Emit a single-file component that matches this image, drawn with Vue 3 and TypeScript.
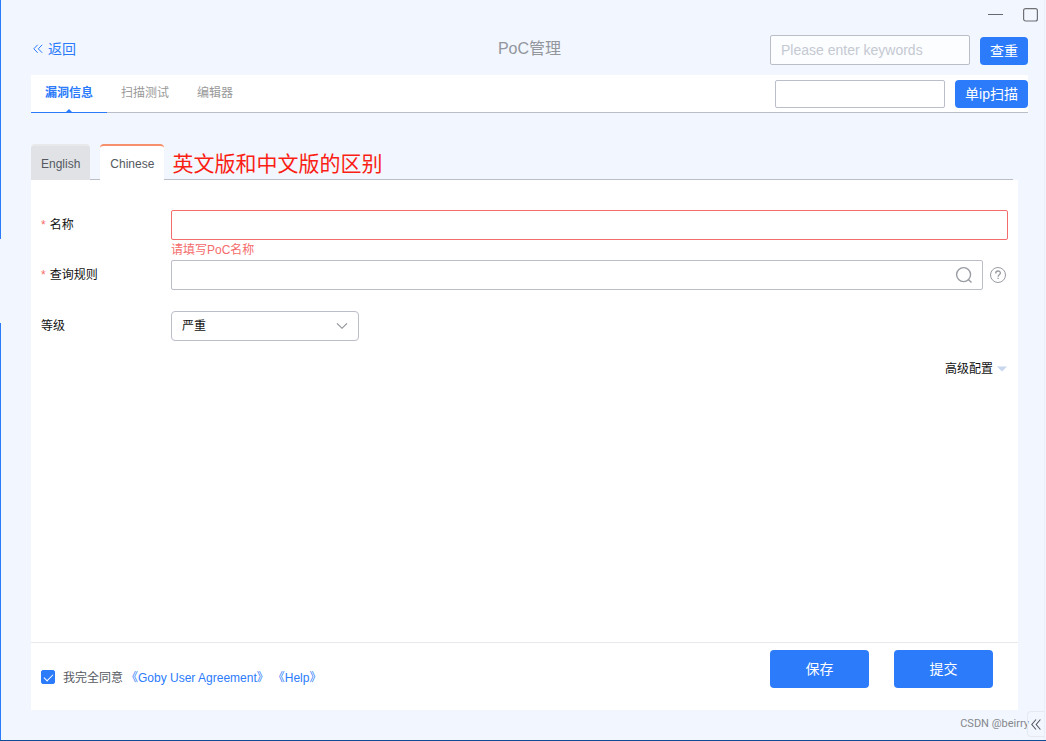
<script setup lang="ts">
import { ref } from 'vue'

const mainTabs = ['漏洞信息', '扫描测试', '编辑器']
const activeMain = ref(0)
const languages = ['English', 'Chinese']
const activeLanguage = ref('Chinese')
const keywords = ref('')
const ip = ref('')
const pocName = ref('')
const query = ref('')
const level = ref('严重')
const agreed = ref(true)
</script>

<template>
  <div class="window">
    <div class="rail" aria-hidden="true"><i></i><span></span><i></i></div>
    <div class="content">
      <div class="titlebar">
        <button type="button" aria-label="最小化">
          <svg width="15" height="14" viewBox="0 0 15 14"><path d="M0 6.5h15" stroke="#666970" /></svg>
        </button>
        <button type="button" aria-label="最大化">
          <svg width="15" height="14" viewBox="0 0 15 14"><rect x=".6" y=".6" width="13.8" height="12.4" rx="2" fill="none" stroke="#6f7074" stroke-width="1.2" /></svg>
        </button>
      </div>

      <header class="header">
        <a href="#" class="back">
          <svg width="10" height="10" viewBox="0 0 10 10"><path d="M4.7.8.8 4.8l3.9 4M9.2.8l-3.9 4 3.9 4" fill="none" stroke="#2b7bfb" /></svg>
          返回
        </a>
        <h1>PoC管理</h1>
        <form class="search" @submit.prevent>
          <input v-model="keywords" type="text" class="box keywords" placeholder="Please enter keywords" aria-label="Please enter keywords" />
          <button type="submit" class="primary small">查重</button>
        </form>
      </header>

      <nav class="mainbar">
        <div class="maintabs">
          <button v-for="(tab, i) in mainTabs" :key="tab" type="button" :class="{ active: activeMain === i }" @click="activeMain = i">{{ tab }}</button>
        </div>
        <form class="scan" @submit.prevent>
          <input v-model="ip" type="text" class="box ip" aria-label="IP" />
          <button type="submit" class="primary small">单ip扫描</button>
        </form>
      </nav>

      <main class="panel-area">
        <div class="languages">
          <button v-for="lang in languages" :key="lang" type="button" :class="{ active: activeLanguage === lang }" @click="activeLanguage = lang">{{ lang }}</button>
          <span class="note">英文版和中文版的区别</span>
        </div>

        <form class="panel" @submit.prevent>
          <div class="fields">
            <div class="row">
              <label for="poc-name"><b>*</b>名称</label>
              <div class="control">
                <input id="poc-name" v-model="pocName" type="text" class="box error" aria-describedby="poc-name-error" />
                <p id="poc-name-error">请填写PoC名称</p>
              </div>
            </div>
            <div class="row query-row">
              <label for="poc-query"><b>*</b>查询规则</label>
              <div class="control query">
                <div class="box query-box">
                  <input id="poc-query" v-model="query" type="text" />
                  <button type="button" aria-label="搜索">
                    <svg width="18" height="18" viewBox="0 0 18 18"><g fill="none" stroke="#999ca2" stroke-width="1.4"><circle cx="8.6" cy="8.6" r="7" /><path d="m13.3 13.4 3.2 3.2" /></g></svg>
                  </button>
                </div>
                <button type="button" aria-label="帮助">
                  <svg width="18" height="18" viewBox="0 0 18 18"><g fill="none" stroke="#999ca2"><circle cx="9" cy="9" r="7.5" /><path d="M6.7 7.4c0-3.2 4.7-3.1 4.7-.3 0 1.8-2.3 1.7-2.3 3.6M9.1 11.8v1.3" stroke-width="1.3" /></g></svg>
                </button>
              </div>
            </div>
            <div class="row">
              <label for="poc-level">等级</label>
              <div class="select">
                <select id="poc-level" v-model="level">
                  <option>严重</option>
                  <option>高危</option>
                  <option>中危</option>
                  <option>低危</option>
                </select>
                <svg width="12" height="8" viewBox="0 0 12 8"><path d="m1 1.3 5 5 5-5" fill="none" stroke="#8b8e95" stroke-width="1.1" /></svg>
              </div>
            </div>
            <button type="button" class="advanced">
              高级配置
              <svg width="10" height="6" viewBox="0 0 10 6"><path d="M0 .5h10L5 5.5z" fill="#c8d6ee" /></svg>
            </button>
          </div>

          <footer class="footer">
            <div class="agreement">
              <input id="agree" v-model="agreed" type="checkbox" />
              <label for="agree">我完全同意</label>
              <a href="#">《Goby User Agreement》</a>
              <a href="#">《Help》</a>
            </div>
            <div class="actions">
              <button type="button" class="primary large">保存</button>
              <button type="submit" class="primary large">提交</button>
            </div>
          </footer>
        </form>
      </main>

      <div class="bottom">
        <span>CSDN @beirry</span>
        <button type="button" aria-label="展开">
          <svg width="10" height="11" viewBox="0 0 10 11"><path d="M5 .5.8 5.5l4.2 5M9.4.5 5.2 5.5l4.2 5" fill="none" stroke="#55585f" stroke-width="1.1" /></svg>
        </button>
      </div>
    </div>
  </div>
</template>

<style>
body {
  margin: 0;
}
</style>

<style scoped>
* {
  box-sizing: border-box;
}
.window {
  display: flex;
  min-height: 100vh;
  background: #f1f6ff;
  border-bottom: 1px solid #0e4c94;
  font: 12px/20px "Liberation Sans", "Noto Sans CJK SC", sans-serif;
  color: #111;
}
button,
input,
select {
  font: inherit;
  color: inherit;
  margin: 0;
}
button {
  padding: 0;
  border: 0;
  background: none;
  cursor: pointer;
}
svg {
  display: block;
  flex: none;
}
a {
  color: #2b7bfb;
  text-decoration: none;
}
.rail {
  flex: none;
  width: 1px;
  display: grid;
  grid-template-rows: 239px 84px 1fr;
}
.rail i {
  background: #2b7bfb;
}
.content {
  flex: 1;
  min-width: 0;
  display: flex;
  flex-direction: column;
  padding-left: 30px;
  margin-right: 1px;
  border-right: 1px solid #e9eef7;
}
.titlebar {
  display: flex;
  justify-content: flex-end;
  gap: 20px;
  height: 30px;
  padding: 8px 6px 8px 0;
}
.header {
  display: grid;
  grid-template-columns: 1fr auto 1fr;
  align-items: center;
  height: 45px;
  margin-right: 16px;
  padding-bottom: 6px;
}
.back {
  display: flex;
  align-items: center;
  gap: 5px;
  padding: 0 0 2px 2px;
  font-size: 14px;
}
h1 {
  margin: 0;
  padding-bottom: 2px;
  font-size: 16px;
  font-weight: 400;
  color: #93969c;
}
.search,
.scan {
  display: flex;
  align-items: center;
  justify-content: flex-end;
  gap: 10px;
}
.search {
  align-items: flex-end;
}
.box {
  height: 30px;
  padding: 0 10px;
  border: 1px solid #bbbdc9;
  border-radius: 2px;
  background: #fff;
  outline: none;
}
.keywords {
  width: 200px;
  background: #fbfdff;
  font-size: 14px;
}
.keywords::placeholder {
  color: #c5c9d2;
  opacity: 1;
}
.primary {
  border-radius: 4px;
  background: #2b7bfb;
  color: #fff;
  font-size: 14px;
}
.small {
  height: 28px;
  padding: 0 10px;
}
.mainbar {
  display: flex;
  justify-content: space-between;
  height: 38px;
  margin-right: 16px;
  background: #fff;
  border-bottom: 1px solid #bbbdc9;
}
.maintabs {
  display: flex;
  height: 38px;
}
.maintabs button {
  position: relative;
  padding: 0 14px 2px;
  border-bottom: 1px solid transparent;
  color: #999;
}
.maintabs .active {
  border-color: #2b7bfb;
  color: #2b7bfb;
  font-weight: 700;
}
.maintabs .active::after {
  content: "";
  position: absolute;
  left: calc(50% - 3px);
  bottom: 0;
  border: 3px solid transparent;
  border-top: 0;
  border-bottom-color: #2b7bfb;
}
.ip {
  width: 170px;
  height: 28px;
}
.panel-area {
  flex: 1;
  display: flex;
  flex-direction: column;
  margin: 31px 26px 0 0;
}
.languages {
  display: flex;
  height: 36px;
  margin-right: 5px;
  background: linear-gradient(#bbbdc9, #bbbdc9) bottom / 100% 1px no-repeat;
}
.languages button {
  padding: 2px 10px 0;
  border-top: 2px solid #e8e9eb;
  border-radius: 4px 4px 0 0;
  background: #e0e2e6;
  color: #55585f;
}
.languages button + button {
  margin-left: 10px;
}
.languages .active {
  border-color: #f68f6b;
  background: #fff;
}
.note {
  padding: 5px 0 0 8px;
  font-size: 21px;
  line-height: 30px;
  color: #fa1e14;
}
.panel {
  flex: 1;
  display: flex;
  flex-direction: column;
  background: #fff;
}
.fields {
  flex: 1;
  display: flex;
  flex-direction: column;
  padding: 30px 10px 0;
}
.row {
  display: flex;
}
.row label {
  flex: none;
  width: 130px;
  line-height: 30px;
}
.row label b {
  margin-right: 4px;
  color: #f56c6c;
  font-weight: 400;
}
.control {
  flex: 1;
  min-width: 0;
}
.control > .box {
  display: block;
  width: 100%;
}
.control > .error {
  border-color: #f56c6c;
}
.control p {
  margin: 0;
  color: #f56c6c;
}
.query-row {
  margin-bottom: 21px;
}
.query {
  display: flex;
  align-items: center;
  gap: 6px;
}
.control > .query-box {
  flex: 1;
  display: flex;
  align-items: center;
}
.query-box {
  padding: 0 9px;
}
.query-box input {
  flex: 1;
  min-width: 0;
  padding: 0;
  border: 0;
  outline: none;
}
.query > button {
  margin-right: 1px;
}
.select {
  position: relative;
  width: 188px;
}
.select select {
  display: block;
  width: 100%;
  height: 30px;
  padding: 0 10px;
  border: 1px solid #bbbdc9;
  border-radius: 4px;
  background: #fff;
  appearance: none;
}
.select svg {
  position: absolute;
  right: 11px;
  top: 11px;
  pointer-events: none;
}
.advanced {
  display: flex;
  align-items: center;
  gap: 4px;
  align-self: flex-end;
  margin: 18px 1px 0 0;
}
.footer {
  display: flex;
  justify-content: space-between;
  align-items: flex-start;
  height: 68px;
  padding: 7px 25px 0 10px;
  border-top: 1px solid #e8e9ec;
}
.agreement {
  display: flex;
  align-items: center;
  padding-top: 18px;
  color: #55585f;
}
.agreement label {
  margin: 0 3px 0 8px;
}
.agreement a + a {
  margin-left: 4px;
}
.agreement input {
  appearance: none;
  width: 14px;
  height: 14px;
  margin-bottom: 2px;
  border: 1px solid #bbbdc9;
  border-radius: 2px;
  display: grid;
  place-items: center;
}
.agreement input:checked {
  border-color: #2b7bfb;
  background: #2b7bfb;
}
.agreement input:checked::after {
  content: "";
  width: 8px;
  height: 4px;
  margin-bottom: 2px;
  border: solid #fff;
  border-width: 0 0 1px 1px;
  transform: rotate(-45deg);
}
.actions {
  display: flex;
  gap: 25px;
}
.large {
  width: 99px;
  height: 38px;
}
.bottom {
  display: flex;
  align-items: center;
  justify-content: flex-end;
  height: 30px;
  padding-bottom: 2px;
  color: #85878c;
}
.bottom span {
  margin-right: -2px;
  font-family: Roboto, "Noto Sans CJK SC", sans-serif;
  font-size: 11px;
}
.bottom button {
  display: grid;
  place-items: center;
  width: 17px;
  height: 26px;
  border: 1px solid #e6e9f0;
  border-right: 0;
  border-radius: 4px 0 0 4px;
}
</style>
